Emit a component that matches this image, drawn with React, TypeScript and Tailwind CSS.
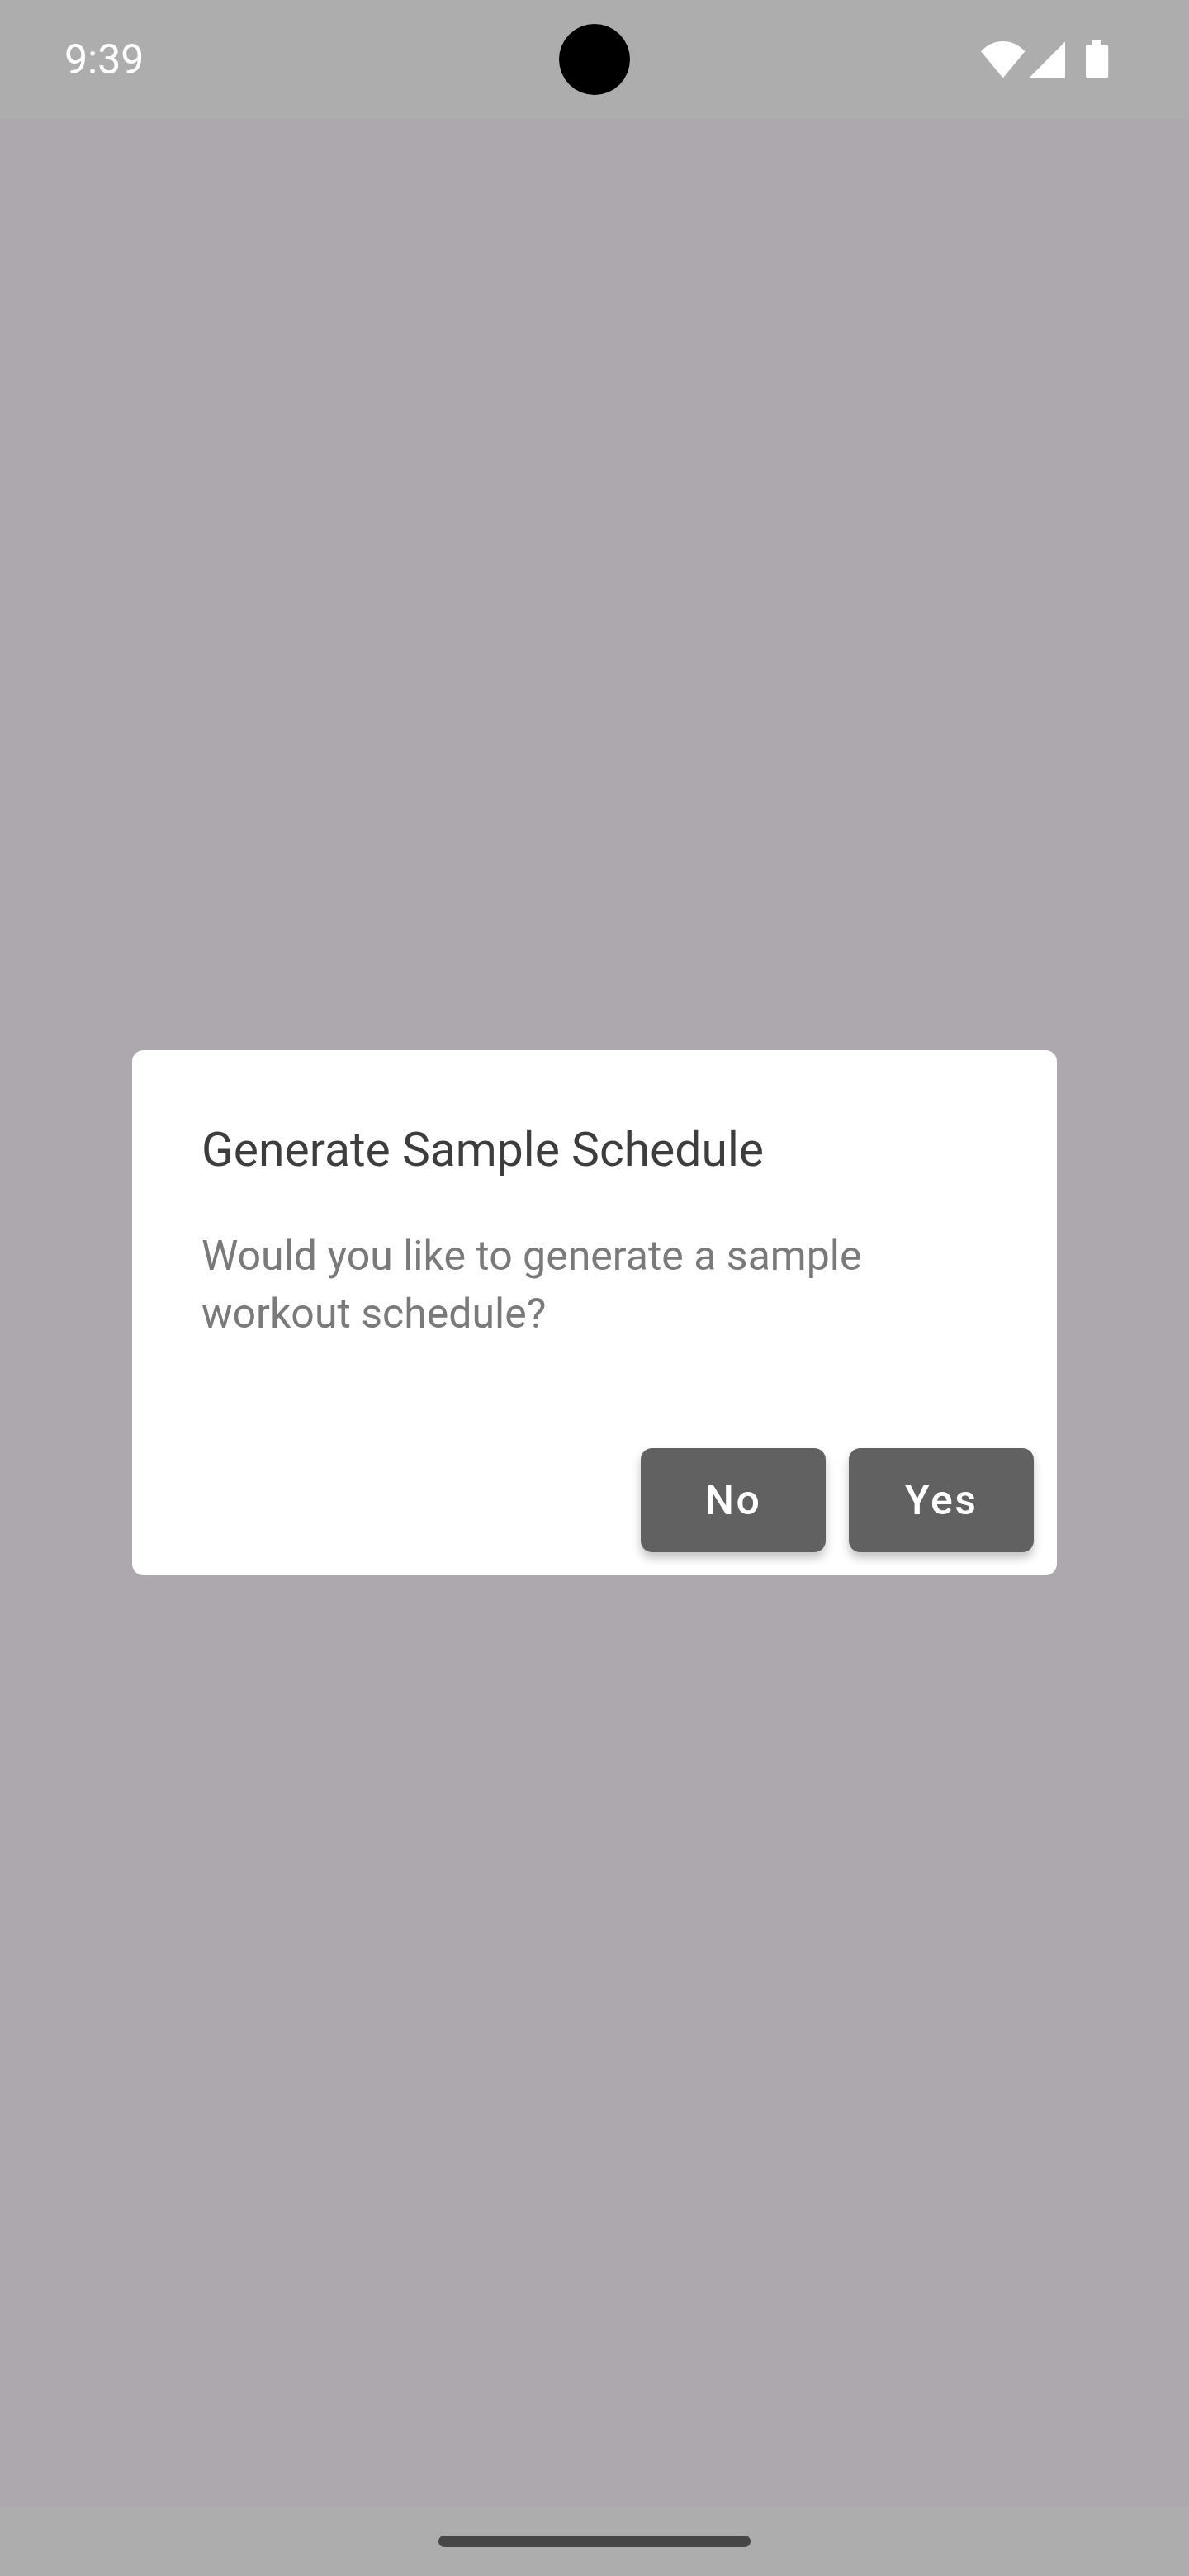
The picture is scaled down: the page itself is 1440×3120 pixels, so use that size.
function WifiIcon() {
  return (
    <svg width="54" height="46" viewBox="0 0 54 46" fill="currentColor" aria-hidden="true">
      <path d="M0 13.3C7 5.5 16.5 1 26.7 1S46.400 5.500 53.300 13.300L26.700 45.600Z" />
    </svg>
  );
}

function SignalIcon() {
  return (
    <svg width="44" height="46" viewBox="0 0 44 46" fill="currentColor" aria-hidden="true">
      <path d="M44 1.500V45.700H0Z" />
    </svg>
  );
}

function BatteryIcon() {
  return (
    <svg width="28" height="46" viewBox="0 0 28 46" fill="currentColor" aria-hidden="true">
      <path d="M7.400 0H19V5H24.500A2.700 2.700 0 0 1 27.200 7.700V43A2.700 2.700 0 0 1 24.500 45.700H2.700A2.700 2.700 0 0 1 0 43V7.700A2.700 2.700 0 0 1 2.700 5H7.400Z" />
    </svg>
  );
}

function StatusBar() {
  return (
    <header className="relative flex h-36 items-center justify-between bg-[#adadad] pr-[97px] pl-[78px] text-white">
      <time className="text-[50px] leading-normal">9:39</time>
      <span className="absolute top-[29px] left-1/2 size-[86px] -translate-x-1/2 rounded-full bg-black" />
      <div className="flex items-center">
        <WifiIcon />
        <div className="ml-1">
          <SignalIcon />
        </div>
        <div className="ml-[25px]">
          <BatteryIcon />
        </div>
      </div>
    </header>
  );
}

function DialogButton({ label }: { label: string }) {
  return (
    <button
      type="button"
      className="h-[126px] min-w-[224px] rounded-[14px] bg-[#616161] text-[50px] font-medium tracking-wider text-white shadow-[0_7px_12px_rgba(0,0,0,0.24)]"
    >
      {label}
    </button>
  );
}

function SampleScheduleDialog() {
  return (
    <section
      role="dialog"
      aria-modal="true"
      aria-labelledby="dialog-title"
      aria-describedby="dialog-text"
      className="w-full rounded-[14px] bg-white pt-20 pb-7"
    >
      <h1 id="dialog-title" className="px-21 text-[57px] leading-[82px] text-[#3d3d3d]">
        Generate Sample Schedule
      </h1>
      <p id="dialog-text" className="mt-[52px] px-21 text-[50px] leading-[70px] text-[#7a7a7a]">
        Would you like to generate a sample workout schedule?
      </p>
      <div className="mt-32 flex justify-end gap-7 px-7">
        <DialogButton label="No" />
        <DialogButton label="Yes" />
      </div>
    </section>
  );
}

export default function App() {
  return (
    <div className="flex min-h-screen flex-col bg-[#ada8ad] font-[Roboto,sans-serif]">
      <StatusBar />
      <main className="flex grow items-center px-40">
        <SampleScheduleDialog />
      </main>
      <footer className="flex h-21 items-center justify-center bg-[#adadad]">
        <span className="h-3.5 w-[378px] rounded-full bg-[#464646]" />
      </footer>
    </div>
  );
}
